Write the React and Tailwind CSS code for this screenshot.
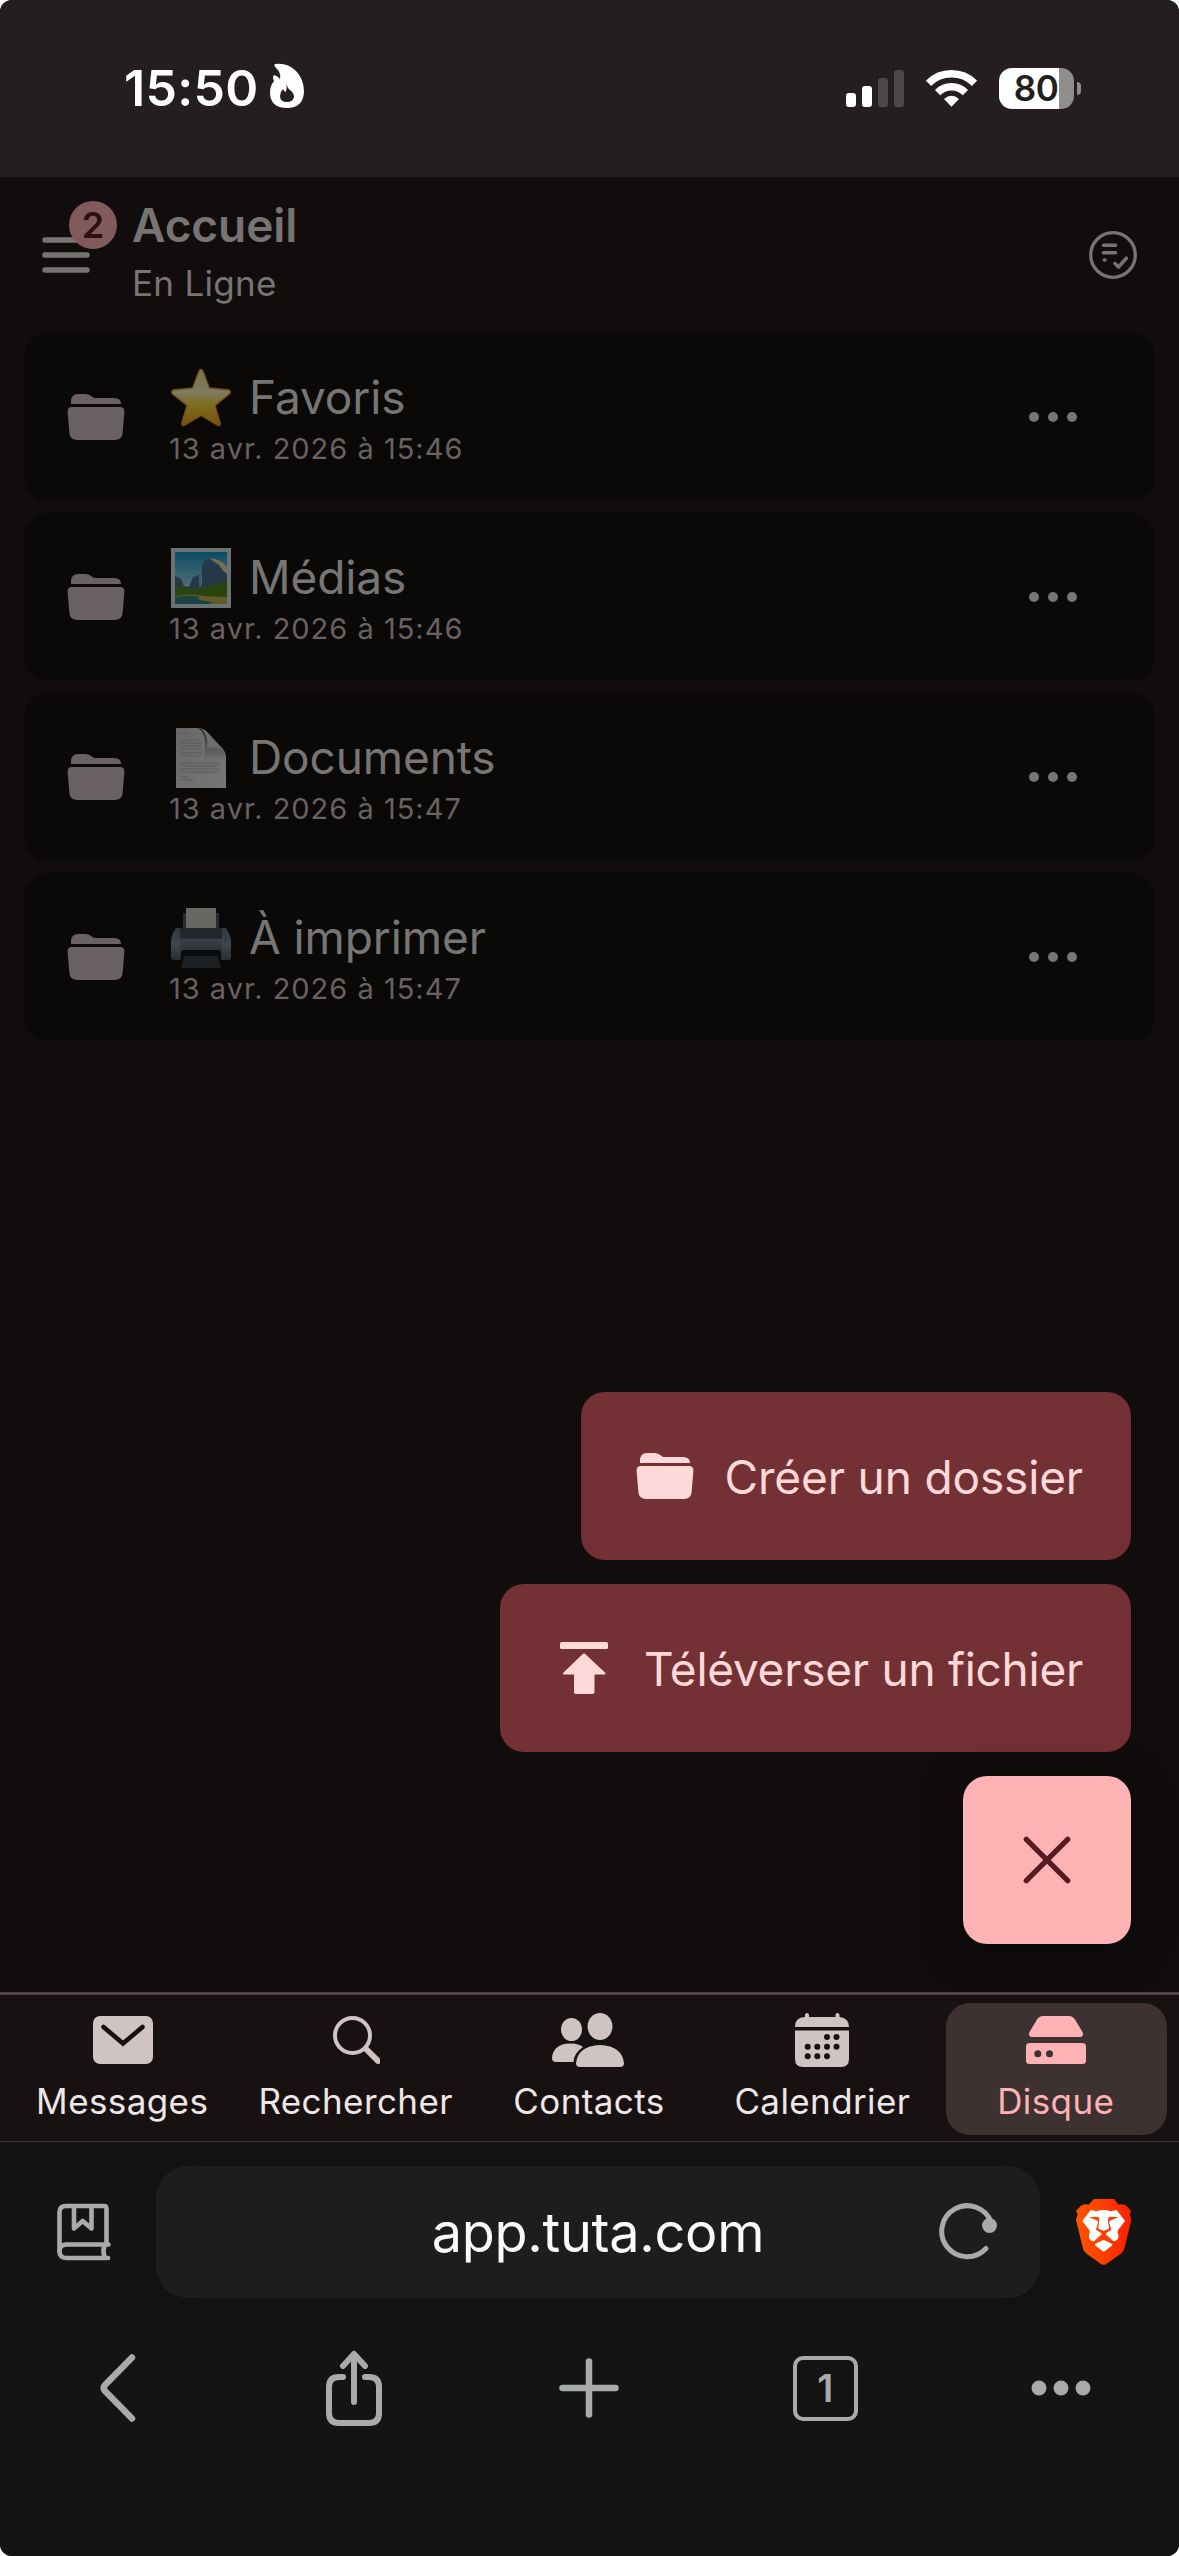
import React from 'react';

const folders = [
  { icon: 'star', name: 'Favoris', date: '13 avr. 2026 à 15:46' },
  { icon: 'picture', name: 'Médias', date: '13 avr. 2026 à 15:46' },
  { icon: 'page', name: 'Documents', date: '13 avr. 2026 à 15:47' },
  { icon: 'printer', name: 'À imprimer', date: '13 avr. 2026 à 15:47' },
];

const FolderIcon = () => (
  <svg width="58" height="46" viewBox="0 0 58 46" fill="currentColor">
    <path d="M4 10V8Q4 0 11 0H19Q22 0 25 2.5L27 4H47Q54 4 54 10Z" />
    <path d="M5 13H53Q57.7 13 57.4 18L55.6 39Q55 46 48 46H10Q3 46 2.4 39L.6 18Q.3 13 5 13Z" />
  </svg>
);

const StarEmoji = () => (
  <svg width="60" height="60" viewBox="0 0 60 60">
    <defs>
      <linearGradient id="star" x1="0" y1="0" x2="0" y2="1">
        <stop offset="0" stopColor="#7a6f4c" />
        <stop offset=".4" stopColor="#7f7c62" />
        <stop offset=".62" stopColor="#7d6d1e" />
        <stop offset="1" stopColor="#74500f" />
      </linearGradient>
    </defs>
    <path
      d="M27.800 3.500Q30-.5 32.200 3.500L38.500 20L58 22Q60.500 23.500 58.500 26L44 37.500L49.300 55.500Q49.300 58.500 46 57L30 47.500L14 57Q10.700 58.500 10.700 55.500L16 37.500L1.500 26Q-.5 23.500 2 22L21.500 20Z"
      fill="url(#star)"
      stroke="#73501a"
      strokeWidth="1.3"
      strokeLinejoin="round"
    />
  </svg>
);

const PictureEmoji = () => (
  <svg width="60" height="60" viewBox="0 0 60 60">
    <defs>
      <linearGradient id="sky" x1="0" y1="0" x2="0" y2="1">
        <stop offset="0" stopColor="#0c4c66" />
        <stop offset=".7" stopColor="#547075" />
      </linearGradient>
    </defs>
    <rect x="0" y="0" width="60" height="60" fill="#6b7274" />
    <rect x="4" y="4" width="52" height="52" fill="url(#sky)" />
    <path d="M4 28L10 31L13 38L18 39L22 29L29 27L31 39V18Q33 11 39 10Q50 11 56 21V44H4Z" fill="#25384a" />
    <path d="M38 10.5Q50 10 56 19V26L52 23L48 17Z" fill="#756d55" />
    <path d="M29 28V39" stroke="#476174" strokeWidth="1.5" />
    <path
      d="M4 40L6 36L9 42L11 36L14 41L17 38L20 43L24 38L28 42L32 37L35 41L39 35L42 40L46 32L49 38L53 30L56 35V50H4Z"
      fill="#29440f"
    />
    <path d="M4 48Q20 45 34 48L56 49V56H4Z" fill="#625a28" />
    <path d="M4 49Q18 46 29 49Q22 52 42 54L38 56H4Z" fill="#1c4246" />
  </svg>
);

const PageEmoji = () => (
  <svg width="60" height="60" viewBox="0 0 60 60">
    <defs>
      <linearGradient id="paper" x1="0" y1="0" x2="1" y2="1">
        <stop offset="0" stopColor="#686868" />
        <stop offset="1" stopColor="#777" />
      </linearGradient>
      <linearGradient id="curl" x1="0" y1="0" x2="0" y2="1">
        <stop offset="0" stopColor="#303030" />
        <stop offset="1" stopColor="#707070" />
      </linearGradient>
    </defs>
    <path d="M5 0H27Q32 0 36 4L51 20Q55 25 55 31V60H5Z" fill="url(#paper)" />
    <path
      d="M9 5.5H17M9 12H28M9 15H31M9 18H30M9 21H30M9 25H31M9 28H29M9 35H49M9 38H47M9 41H49M9 44H46M9 49H17M9 52H22"
      stroke="#5b5b5b"
      strokeWidth="1.1"
    />
    <path d="M26 0Q37 3 33 32L55 30Q55 24 51 20L36 4Q32 0 26 0Z" fill="url(#curl)" />
    <path d="M31 1Q38 9 36 20Q46 18 53 23L36 4Q33 1 31 1Z" fill="#6e6e6e" />
  </svg>
);

const PrinterEmoji = () => (
  <svg width="60" height="60" viewBox="0 0 60 60">
    <defs>
      <linearGradient id="body" x1="0" y1="0" x2="0" y2="1">
        <stop offset="0" stopColor="#20262c" />
        <stop offset=".32" stopColor="#22282e" />
        <stop offset=".36" stopColor="#3b4045" />
        <stop offset="1" stopColor="#25282c" />
      </linearGradient>
      <linearGradient id="side" x1="0" y1="0" x2="0" y2="1">
        <stop offset="0" stopColor="#30383f" />
        <stop offset=".5" stopColor="#3f464c" />
        <stop offset="1" stopColor="#2a2f34" />
      </linearGradient>
    </defs>
    <rect x="12" y="5" width="36" height="20" fill="#252c32" />
    <rect x="15" y="0" width="30" height="21" fill="#696762" />
    <path d="M5 20H55Q60 27 60 34V49Q60 52 57 52H3Q0 52 0 49V34Q0 27 5 20Z" fill="url(#side)" />
    <rect x="9" y="20" width="42" height="32" fill="url(#body)" />
    <path d="M10 45Q10 42 14 42H46Q50 42 50 45V59H10Z" fill="#090b0c" />
    <path d="M13 48H47L50 60H10Z" fill="#1c2023" />
    <circle cx="55" cy="32" r="1.6" fill="#1f3b52" />
  </svg>
);

const emojis = {
  star: <StarEmoji />,
  picture: <PictureEmoji />,
  page: <PageEmoji />,
  printer: <PrinterEmoji />,
};

const StatusBar = () => (
  <div className="flex h-[177px] shrink-0 items-center justify-between bg-[#241e1e] pb-px pl-[124px] pr-[98px] text-white">
    <div className="flex items-center gap-[11px]">
      <span className="text-[50px] font-semibold leading-none tracking-[0.3px]">15:50</span>
      <svg width="36" height="46" viewBox="0 0 36 46" className="mb-1">
        <path
          d="M6 1Q18-1 27 8Q35 16 35 29Q34 45 18 45Q1 45 1 29Q1 23 5 18Q3 14 5 12Q9 13 11 16Q12 10 8 6Q4 2 6 1Z"
          fill="#fff"
        />
        <path d="M17.5 20Q18 25 21 27Q25 30 25 34Q24 39 18 39Q11 39 11 33Q11 29 14 26Q15 29 17 29Q18 25 17.5 20Z" fill="#241e1e" />
      </svg>
    </div>
    <div className="flex items-center gap-[22px]">
      <svg width="58" height="37" viewBox="0 0 58 37" fill="#fff">
        <rect x="0" y="23" width="10" height="14" rx="3" />
        <rect x="16" y="16" width="10" height="21" rx="3" />
        <rect x="32" y="8" width="10" height="29" rx="3" fill="#4e4949" />
        <rect x="48" y="0" width="10" height="37" rx="3" fill="#4e4949" />
      </svg>
      <svg width="51" height="37" viewBox="0 0 51 37" fill="none" stroke="#fff">
        <path d="M2.5 13.3Q12 3.8 25.5 3.8Q39 3.8 48.5 13.3" strokeWidth="7.4" />
        <path d="M11.6 22.6Q17.3 16.8 25.5 16.8Q33.7 16.8 39.4 22.6" strokeWidth="7.4" />
        <path d="M18 29Q25.500 22.500 33 29L25.500 36.800Z" fill="#fff" stroke="none" />
      </svg>
      <div className="flex items-center gap-[3px]">
        <div className="flex h-[41px] w-[75px] items-center justify-center overflow-hidden rounded-[13px] bg-[linear-gradient(90deg,#fff_60px,#8f8e8c_60px)] pr-px text-[35px] font-semibold leading-none tracking-[-0.5px] text-[#241e1e]">
          80
        </div>
        <div className="h-[13px] w-[4px] rounded-r-full bg-[#8f8e8c]" />
      </div>
    </div>
  </div>
);

const Header = () => (
  <div className="flex h-[156px] shrink-0 items-center pl-[42px] pr-[42px] text-[#777573]">
    <div className="relative w-[90px]">
      <svg width="48" height="36" viewBox="0 0 48 36" stroke="currentColor" strokeWidth="5.5" strokeLinecap="round">
        <path d="M3 3H45M3 18H45M3 33H45" />
      </svg>
      <div className="absolute -top-[36px] left-[27px] flex size-[48px] items-center justify-center rounded-full bg-[#815a5b] text-[36px] font-semibold leading-none text-[#2d0f12]">
        2
      </div>
    </div>
    <div className="flex-1 pb-[2px]">
      <h1 className="text-[46px] font-semibold leading-[58px] tracking-[-0.1px]">Accueil</h1>
      <p className="text-[35px] leading-[58px] tracking-[0.3px]">En Ligne</p>
    </div>
    <svg width="48" height="48" viewBox="0 0 48 48" fill="none" stroke="currentColor" strokeLinecap="round" strokeLinejoin="round">
      <circle cx="24" cy="24" r="22.3" strokeWidth="3.3" />
      <path d="M14.500 14.300H26.500M14.500 21.700H26.500M15.300 29H16" strokeWidth="3.6" />
      <path d="M26 32.500L29.500 36L37.500 27" strokeWidth="3.4" />
    </svg>
  </div>
);

const FolderRow = ({ folder }) => (
  <div className="flex h-[168px] rounded-[24px] bg-[#0a0907] pl-[43px] pr-[77px] text-[#787674]">
    <div className="flex items-center text-[#696162]">
      <FolderIcon />
    </div>
    <div className="ml-[44px] flex-1 pt-[39px]">
      <div className="flex h-[51px] items-center gap-[18px] pl-[2px]">
        {emojis[folder.icon]}
        <span className="text-[46px] leading-[51px] tracking-[-0.1px]">{folder.name}</span>
      </div>
      <p className="text-[29px] leading-[51px] tracking-[1px] text-[#696162]">{folder.date}</p>
    </div>
    <svg width="50" height="168" viewBox="0 0 50 168" fill="currentColor">
      <circle cx="6" cy="84" r="5" />
      <circle cx="25" cy="84" r="5" />
      <circle cx="44" cy="84" r="5" />
    </svg>
  </div>
);

const ActionMenu = () => (
  <div className="mt-auto flex flex-col items-end gap-[24px] pb-[48px] pr-[48px] text-[46px] text-[#ffd9d9]">
    <button className="flex h-[168px] w-[550px] items-center justify-between rounded-[24px] bg-[#733135] pl-[55px] pr-[48px]">
      <FolderIcon />
      <span className="pt-[2px] leading-none tracking-[-0.15px]">Créer un dossier</span>
    </button>
    <button className="flex h-[168px] w-[631px] items-center justify-between rounded-[24px] bg-[#733135] pl-[60px] pr-[48px]">
      <svg width="48" height="52" viewBox="0 0 48 52" fill="currentColor">
        <rect x="0" y="0" width="48" height="7" rx="1.500" />
        <path d="M22.800 12Q24 10.800 25.200 12L45 30.500Q46.500 32.500 44 32.500H34.500V50Q34.500 52 32.500 52H16Q14 52 14 50V32.500H4.500Q2 32.500 3.500 30.500Z" />
      </svg>
      <span className="pt-[2px] leading-none tracking-[-0.27px]">Téléverser un fichier</span>
    </button>
    <button className="flex size-[168px] items-center justify-center rounded-[24px] bg-[#fdb2b3] shadow-[0_8px_36px_4px_#0a0a09]">
      <svg width="48" height="48" viewBox="0 0 48 48" stroke="#561c22" strokeWidth="5.3" strokeLinecap="round">
        <path d="M3.300 3.300L44.700 44.700M44.700 3.300L3.300 44.700" />
      </svg>
    </button>
  </div>
);

const tabs = [
  {
    label: 'Messages',
    icon: (
      <svg width="60" height="54" viewBox="0 0 60 54">
        <rect x="0" y="3" width="60" height="48" rx="7" fill="currentColor" />
        <path d="M10.500 14L30 30.500L49.500 14" fill="none" stroke="#181112" strokeWidth="4.600" strokeLinecap="round" />
      </svg>
    ),
  },
  {
    label: 'Rechercher',
    icon: (
      <svg width="48" height="54" viewBox="0 0 48 54" fill="none" stroke="currentColor" strokeLinecap="round">
        <circle cx="20.500" cy="22.500" r="17.500" strokeWidth="4" />
        <path d="M34 36L46 48" strokeWidth="6" />
      </svg>
    ),
  },
  {
    label: 'Contacts',
    icon: (
      <svg width="72" height="54" viewBox="0 0 72 54" fill="currentColor" className="-ml-[2px]">
        <ellipse cx="19.500" cy="16.500" rx="10.500" ry="11.500" />
        <path d="M0 45Q1 31 18 30.500Q26 30 31 34Q22 40 21.500 49H4Q0 49 0 45Z" />
        <ellipse cx="48" cy="13.500" rx="12.500" ry="13.500" />
        <path d="M24 50Q26 33 48 32Q70 33 72 50Q72 54 68 54H28Q24 54 24 50Z" />
      </svg>
    ),
  },
  {
    label: 'Calendrier',
    icon: (
      <svg width="54" height="54" viewBox="0 0 54 54" fill="currentColor" className="-ml-[2px]">
        <path d="M0 14Q0 4 10 4V2Q10 0 12 0Q14 0 14 2V4H40.500V2Q40.500 0 42.500 0Q44.500 0 44.500 2V4Q54 5 54 14Z" />
        <path d="M0 17.500H54V46Q54 54 46 54H8Q0 54 0 46Z" />
        <g fill="#181112">
          <circle cx="32" cy="24" r="3" />
          <circle cx="41.500" cy="24" r="3" />
          <circle cx="12.700" cy="33.700" r="3" />
          <circle cx="22.300" cy="33.700" r="3" />
          <circle cx="32" cy="33.700" r="3" />
          <circle cx="41.500" cy="33.700" r="3" />
          <circle cx="12.700" cy="43.300" r="3" />
          <circle cx="22.300" cy="43.300" r="3" />
          <circle cx="32" cy="43.300" r="3" />
        </g>
      </svg>
    ),
  },
  {
    label: 'Disque',
    active: true,
    icon: (
      <svg width="60" height="54" viewBox="0 0 60 54" fill="currentColor">
        <path d="M17 3H43Q47 3 49 6.500L56.500 19Q58 24 54 24H6Q2 24 3.500 19L11 6.500Q13 3 17 3Z" />
        <rect x="0" y="30" width="60" height="21" rx="3.500" />
        <circle cx="11.800" cy="40.700" r="3.500" fill="#3e3132" />
        <circle cx="23.500" cy="40.700" r="3.500" fill="#3e3132" />
      </svg>
    ),
  },
];

const TabBar = () => (
  <nav className="grid h-[150px] shrink-0 grid-cols-5 gap-[12px] border-b border-t-[3px] border-b-[#383334] border-t-[#514447] bg-[#181112] px-[12px] pb-[6px] pt-[8px]">
    {tabs.map((tab) => (
      <div
        key={tab.label}
        className={
          tab.active
            ? 'flex flex-col items-center rounded-[24px] bg-[#3e3132] pt-[10px] text-[#fdb2b3]'
            : 'flex flex-col items-center pt-[10px] text-[#cfc3c4]'
        }
      >
        {tab.icon}
        <span
          className={
            tab.active
              ? 'mt-[9px] pr-px text-[35px] leading-[50px] tracking-[0.4px]'
              : 'mt-[9px] pr-px text-[35px] leading-[50px] tracking-[0.4px] text-[#efe6e6]'
          }
        >
          {tab.label}
        </span>
      </div>
    ))}
  </nav>
);

const BraveLogo = () => (
  <svg width="80" height="84" viewBox="0 0 240 252">
    <defs>
      <linearGradient id="brave" x1="0" y1="0" x2="1" y2="0">
        <stop offset="0" stopColor="#ff5500" />
        <stop offset=".45" stopColor="#ff4000" />
        <stop offset="1" stopColor="#ff2000" />
      </linearGradient>
    </defs>
    <path
      d="M90 27H150L164 44Q178 40 188 48L201 63L197 73L202 90L182 172Q180 184 170 191L128 221Q119 228 110 221L68 191Q58 184 56 172L36 90L41 73L36 63L50 48Q60 40 74 44Z"
      fill="url(#brave)"
    />
    <path
      d="M80 60L98 64Q119 56 140 64L158 60L183 93L165 116Q158 122 163 134Q166 152 148 154L131 138Q120 132 131 126L142 119L136 99Q134 92 148 88L163 82Q146 79 134 81Q130 82 131 90L134 115L119 122L104 115L107 90Q108 82 104 81Q92 79 75 82L90 88Q104 92 102 99L96 119L107 126Q118 132 107 138L90 154Q72 152 75 134Q80 122 73 116L55 93Z"
      fill="#fff"
    />
    <path d="M104 80H134L132 94L135 116L119 122L103 116L106 94Z" fill="#fff" />
    <path d="M93 162L116 151Q119 150 122 151L145 162Q146 165 143 167L119 186L95 167Q92 165 93 162Z" fill="#fff" />
  </svg>
);

const BrowserBar = () => (
  <div className="flex h-[414px] shrink-0 flex-col bg-[#141414] pt-[24px] text-[#a9aaac]">
    <div className="flex h-[132px] items-center">
      <div className="flex w-[156px] justify-center">
        <svg width="54" height="58" viewBox="0 0 54 58" fill="none" stroke="currentColor" strokeWidth="4.600" strokeLinecap="round" strokeLinejoin="round" className="ml-[11px]">
          <path d="M51 55H9Q2.500 55 2.500 48V9Q2.500 3 9 3H47Q49.500 3 49.500 6V41.500" />
          <path d="M51.500 41.500H9Q2.500 42 2.500 48M47.500 42Q45.500 48 47.500 54" />
          <path d="M17 4V25.500L25.700 18L34.500 25.500V4" />
        </svg>
      </div>
      <div className="grid h-[132px] w-[884px] grid-cols-[102px_1fr_102px] items-center rounded-[32px] bg-[#1d1d1d] shadow-[0_6px_18px_#121212]">
        <span />
        <span className="pt-px text-center text-[54px] leading-none tracking-[-0.3px] text-[#fafafa]">app.tuta.com</span>
        <svg width="64" height="64" viewBox="0 0 64 64" fill="none">
          <path d="M53 22A25.500 25.500 0 1 0 48 48.500" stroke="currentColor" strokeWidth="5" strokeLinecap="round" />
          <circle cx="51.500" cy="25.500" r="7.500" fill="currentColor" />
        </svg>
      </div>
      <div className="ml-[24px]">
        <BraveLogo />
      </div>
    </div>
    <div className="mt-[30px] grid h-[120px] grid-cols-5 place-items-center">
      <svg width="36" height="68" viewBox="0 0 36 68" fill="none" stroke="currentColor" strokeWidth="6.500" strokeLinecap="round" strokeLinejoin="round">
        <path d="M32 3.500L5 31Q2.500 34 5 37L32 64.500" />
      </svg>
      <svg width="56" height="76" viewBox="0 0 56 76" fill="none" stroke="currentColor" strokeWidth="6" strokeLinecap="round" strokeLinejoin="round">
        <path d="M17 27H13Q3 27 3 37V63Q3 73 13 73H43Q53 73 53 63V37Q53 27 43 27H39" />
        <path d="M28 52V4M17 16L28 4L39 16" />
      </svg>
      <svg width="60" height="60" viewBox="0 0 60 60" stroke="currentColor" strokeWidth="6.500" strokeLinecap="round">
        <path d="M30 3.500V56.500M3.500 30H56.500" />
      </svg>
      <div className="flex size-[65px] items-center justify-center rounded-[10px] border-4 border-[#a9aaac] text-[38px] font-semibold leading-none">
        1
      </div>
      <svg width="60" height="16" viewBox="0 0 60 16" fill="currentColor">
        <circle cx="8" cy="8" r="7.500" />
        <circle cx="30" cy="8" r="7.500" />
        <circle cx="52" cy="8" r="7.500" />
      </svg>
    </div>
  </div>
);

const App = () => {
  return (
    <div className="bg-white">
      <div className="flex h-[2556px] w-[1179px] flex-col overflow-hidden rounded-[12px] bg-[#120d0d] font-['Inter',sans-serif]">
        <StatusBar />
        <Header />
        <div className="flex flex-col gap-[12px] px-[24px]">
          {folders.map((folder) => (
            <FolderRow key={folder.name} folder={folder} />
          ))}
        </div>
        <ActionMenu />
        <TabBar />
        <BrowserBar />
      </div>
    </div>
  );
};

export default App;
